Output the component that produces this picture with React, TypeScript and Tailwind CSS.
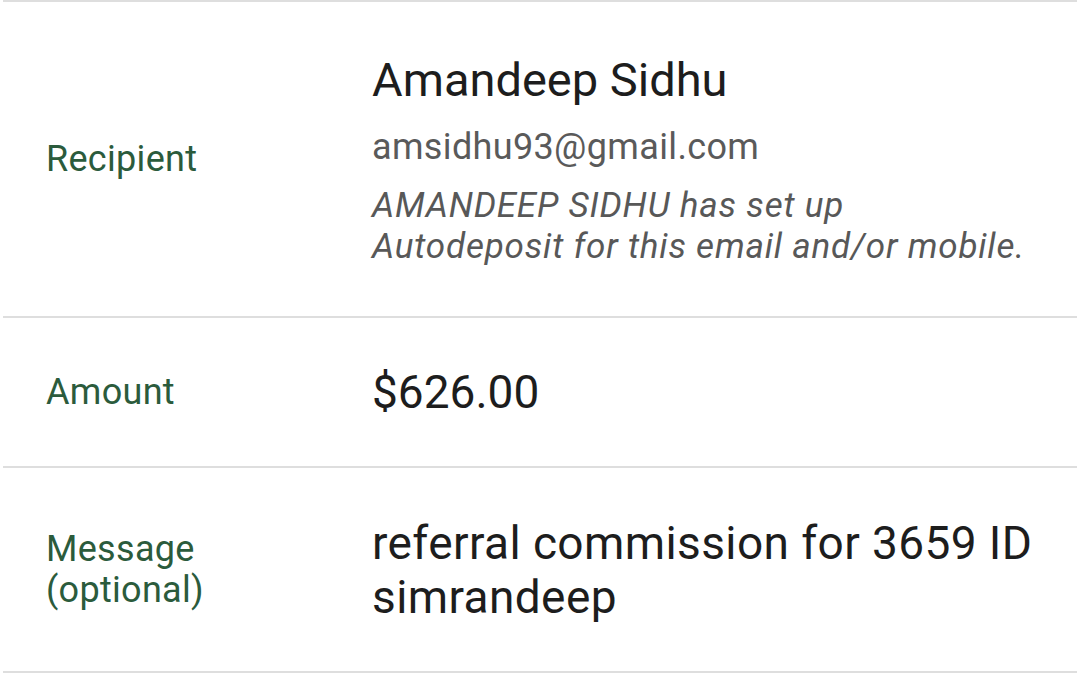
import React from 'react';

interface DetailRowProps {
  label: React.ReactNode;
  children: React.ReactNode;
  rowClass: string;
}

const DetailRow: React.FC<DetailRowProps> = ({ label, children, rowClass }) => (
  <div className={`flex items-center pl-[43px] pr-4 border-b-2 border-[#dedede] ${rowClass}`}>
    <div className="w-[326px] shrink-0 text-[36px] leading-[41px] tracking-[0.3px] text-[#2b5b3c]">{label}</div>
    <div className="flex-1 min-w-0">{children}</div>
  </div>
);

export default function App() {
  return (
    <div
      className="w-[1080px] h-[676px] bg-white overflow-hidden"
      style={{ fontFamily: 'Roboto, "Noto Sans", sans-serif' }}
    >
      <div className="mx-[3px] border-t-2 border-[#dedede]">
        <DetailRow label="Recipient" rowClass="h-[316px]">
          <div className="text-[47px] leading-[56px] text-[#1d1d1d]">Amandeep Sidhu</div>
          <div className="mt-[19px] text-[36px] leading-[41px] tracking-[0.35px] text-[#5a5a5a]">amsidhu93@gmail.com</div>
          <div className="mt-[17px] text-[35px] leading-[41px] tracking-[0.8px] italic text-[#585858]">
            AMANDEEP SIDHU has set up
            <br />
            Autodeposit for this email and/or mobile.
          </div>
        </DetailRow>

        <DetailRow label="Amount" rowClass="h-[150px]">
          <div className="text-[46px] leading-[56px] text-[#1d1d1d]">$626.00</div>
        </DetailRow>

        <DetailRow label={<>Message<br />(optional)</>} rowClass="h-[205px]">
          <div className="text-[46px] leading-[54px] tracking-[0.4px] text-[#1d1d1d]">
            referral commission for 3659 ID
            <br />
            simrandeep
          </div>
        </DetailRow>
      </div>
    </div>
  );
}
